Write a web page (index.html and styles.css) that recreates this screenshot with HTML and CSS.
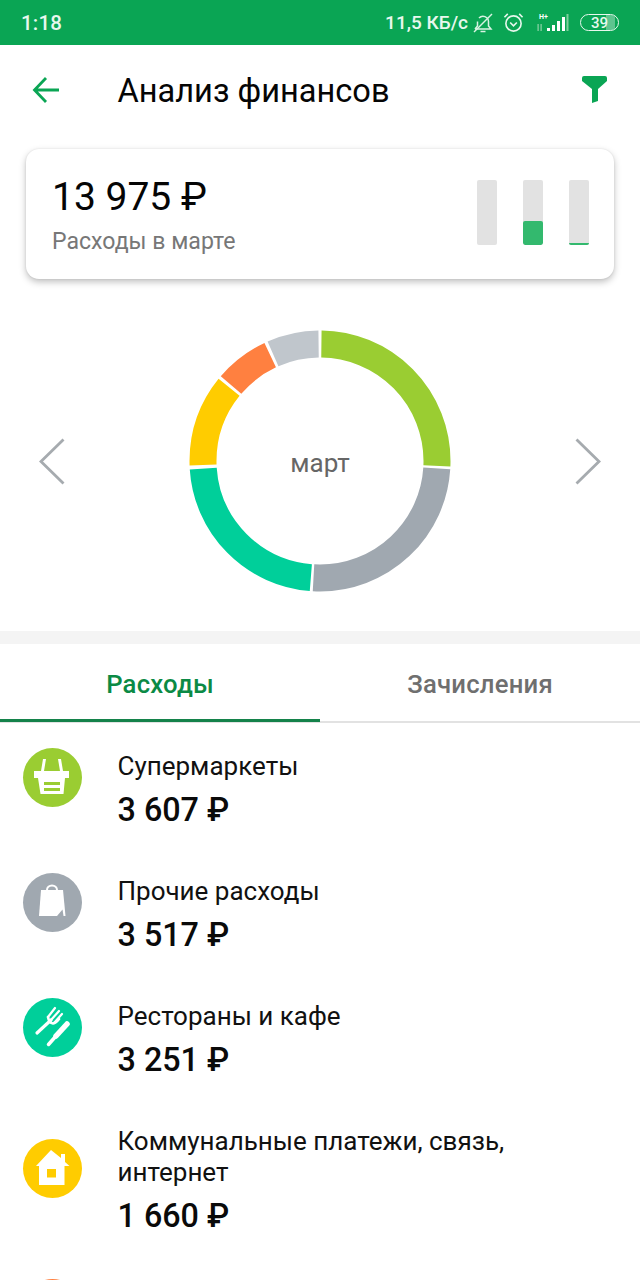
FILE: index.html
```html
<!DOCTYPE html>
<html lang="ru">
<head>
<meta charset="utf-8">
<title>Анализ финансов</title>
<link rel="stylesheet" href="styles.css">
</head>
<body>
<div class="page">
  <header class="statusbar">
    <span class="time">1:18</span>
    <div class="status-right">
      <span class="speed">11,5 КБ/с</span>
      <svg class="st-bell" viewBox="0 0 22 22" fill="none" stroke="#d9f3e3" stroke-width="1.500"><path d="M3 17h16l-2.500-3V9.500A5.500 5.500 0 0 0 7 6M5.500 9.500V14L3 17M8.500 19.500h5"/><path d="M2 20 20 2"/></svg>
      <svg class="st-alarm" viewBox="0 0 22 22" fill="none" stroke="#e6f7ec" stroke-width="1.700"><circle cx="11" cy="12" r="8"/><path d="M7.500 11 11 14.500 14.500 11M1.500 5.500 5 2M20.500 5.500 17 2"/></svg>
      <svg class="st-signal" viewBox="0 0 34 20"><text x="3" y="6" class="st-h">H+</text><rect x="1.500" y="11" width="1.200" height="7" fill="#8fd3a8"/><rect x="4.500" y="11" width="1.200" height="7" fill="#8fd3a8"/><g fill="#fff"><rect x="11" y="15" width="3" height="3"/><rect x="16" y="12" width="3" height="6"/><rect x="21" y="8" width="3" height="10"/><rect x="26" y="4" width="3" height="14"/></g><rect x="30.500" y="1" width="2" height="17" fill="#7fcf9c"/></svg>
      <div class="battery"><span class="battery-fill"></span><span class="battery-num">39</span></div>
    </div>
  </header>

  <nav class="appbar">
    <svg class="back" viewBox="0 0 28 28" fill="none" stroke="#0aa554" stroke-width="2.800"><path d="M27 14H3M14 2 2.500 14 14 26"/></svg>
    <h1 class="title">Анализ финансов</h1>
    <svg class="filter" viewBox="0 0 27 27" fill="#0aa554"><path d="M1 2Q1 0 3 0H24Q26 0 26 2V5L17 13V25L11 27V13L1 5Z"/></svg>
  </nav>

  <section class="card">
    <div class="card-text">
      <div class="card-sum">13 975 ₽</div>
      <div class="card-label">Расходы в марте</div>
    </div>
    <div class="bars">
      <div class="bar"></div>
      <div class="bar"><span class="bar-fill bar-fill-mid"></span></div>
      <div class="bar"><span class="bar-fill bar-fill-low"></span></div>
    </div>
  </section>

  <section class="chart">
    <svg class="chev" viewBox="0 0 26 47" fill="none" stroke="#a6abaf" stroke-width="2.800"><path d="M24.500 1.500 2 23.500 24.500 45.500"/></svg>
    <div class="donut">
      <svg viewBox="0 0 262 262" fill="none" stroke-width="27">
        <circle class="seg" cx="131" cy="131" r="117" pathLength="360" stroke="#9acd32" stroke-dasharray="91.700 268.300" stroke-dashoffset="-0.700"/>
        <circle class="seg" cx="131" cy="131" r="117" pathLength="360" stroke="#a0a8b0" stroke-dasharray="89.600 270.400" stroke-dashoffset="-93.600"/>
        <circle class="seg" cx="131" cy="131" r="117" pathLength="360" stroke="#00cf9a" stroke-dasharray="81.800 278.200" stroke-dashoffset="-184.500"/>
        <circle class="seg" cx="131" cy="131" r="117" pathLength="360" stroke="#ffcc00" stroke-dasharray="41 319" stroke-dashoffset="-268"/>
        <circle class="seg" cx="131" cy="131" r="117" pathLength="360" stroke="#ff8040" stroke-dasharray="24.300 335.700" stroke-dashoffset="-310.500"/>
        <circle class="seg" cx="131" cy="131" r="117" pathLength="360" stroke="#c0c6cc" stroke-dasharray="23 337" stroke-dashoffset="-336.300"/>
      </svg>
      <span class="donut-label">март</span>
    </div>
    <svg class="chev" viewBox="0 0 26 47" fill="none" stroke="#a6abaf" stroke-width="2.800"><path d="M1.500 1.500 24 23.500 1.500 45.500"/></svg>
  </section>

  <div class="divider"></div>

  <div class="tabs">
    <div class="tab tab-active">Расходы</div>
    <div class="tab">Зачисления</div>
  </div>

  <ul class="list">
    <li class="item">
      <span class="ico ico-green">
        <svg viewBox="0 0 59 59" fill="#fff"><path d="M20 11h3l-2 12h-3ZM35 11h3l2 12h-3Z"/><path d="M11 23H46V30H42L40.500 46H17.500L15 30H11Z"/><rect x="21" y="34" width="16" height="3" fill="#9acd32"/><rect x="21" y="40" width="16" height="3" fill="#9acd32"/></svg>
      </span>
      <div class="item-body"><div class="item-name">Супермаркеты</div><div class="item-sum">3 607 ₽</div></div>
    </li>
    <li class="item">
      <span class="ico ico-gray">
        <svg viewBox="0 0 59 59" fill="#fff"><path d="M23 18v-1a6 5.500 0 0 1 12 0v1h-2v-1a4 3.500 0 0 0-8 0v1Z"/><path d="M18 17H40L42.500 43H16Z"/><path d="M34 43 39.500 36.500 40.500 43Z" fill="#a0a8b0"/></svg>
      </span>
      <div class="item-body"><div class="item-name">Прочие расходы</div><div class="item-sum">3 517 ₽</div></div>
    </li>
    <li class="item">
      <span class="ico ico-teal">
        <svg viewBox="0 0 59 59" fill="none" stroke="#fff" stroke-linecap="round"><path d="M14 35 28 22" stroke-width="3.200"/><path d="M25 19 32 10M28 22 36 13M31 25 39 16" stroke-width="2.200"/><path d="M25 19Q26 25 30 25.500Q33 25 36 21" stroke-width="2.600"/><path d="M25.500 46.500 33 38" stroke-width="3.500"/><path d="M33 38 44 26" stroke-width="5.500"/></svg>
      </span>
      <div class="item-body"><div class="item-name">Рестораны и кафе</div><div class="item-sum">3 251 ₽</div></div>
    </li>
    <li class="item">
      <span class="ico ico-yellow">
        <svg viewBox="0 0 59 59" fill="#fff"><path d="M28 11 38 19V15H42V23L46.500 27H41.500V46H16V27H13Z"/><rect x="24" y="30" width="9" height="8.500" fill="#ffcc00"/></svg>
      </span>
      <div class="item-body"><div class="item-name">Коммунальные платежи, связь,<br>интернет</div><div class="item-sum">1 660 ₽</div></div>
    </li>
    <li class="item">
      <span class="ico ico-orange"></span>
      <div class="item-body"><div class="item-name"></div></div>
    </li>
  </ul>
</div>
</body>
</html>
```
FILE: styles.css
```css
* { box-sizing: border-box; }
html, body { margin: 0; padding: 0; background: #fff; }
body { font-family: Roboto, "Liberation Sans", sans-serif; color: #000; }
.page { width: 640px; height: 1280px; overflow: hidden; display: flex; flex-direction: column; }

.statusbar { height: 45px; flex: none; background: #0aa554; color: #e8f8ee; display: flex; align-items: center; justify-content: space-between; padding: 0 21px 0 21px; }
.time { font-size: 20.500px; font-weight: 500; letter-spacing: .2px; }
.status-right { display: flex; align-items: center; }
.speed { font-size: 19px; font-weight: 500; }
.st-bell { width: 22px; height: 22px; margin-left: 4px; }
.st-alarm { width: 21px; height: 21px; margin-left: 9px; }
.st-signal { width: 34px; height: 20px; margin-left: 12px; }
.st-h { font: 700 7px Roboto, sans-serif; fill: #fff; }
.battery { position: relative; width: 39px; height: 17px; margin-left: 10px; border: 1.500px solid #e8f8ee; border-radius: 9px; display: flex; align-items: center; justify-content: center; overflow: hidden; }
.battery-fill { position: absolute; left: 0; top: 0; bottom: 0; width: 92%; border-right: 9px solid rgba(255,255,255,.35); }
.battery-num { position: relative; font-size: 15px; font-weight: 500; }

.appbar { height: 92px; flex: none; display: flex; align-items: center; padding: 0 32px 0 32px; }
.back { width: 28px; height: 28px; flex: none; margin-top: -3px; }
.title { font-size: 32.600px; font-weight: 400; margin: 0 0 0 57.500px; flex: 1; color: #050505; }
.filter { width: 27px; height: 27px; flex: none; margin-top: -3px; }

.card { height: 130px; flex: none; margin: 12px 26px 0; background: #fff; border-radius: 13px; box-shadow: 0 3px 7px rgba(0,0,0,.25), 0 0 2px rgba(0,0,0,.1); display: flex; justify-content: space-between; align-items: center; padding: 0 25px 0 26px; }
.card-sum { font-size: 39px; line-height: 46px; color: #050505; }
.card-label { font-size: 23.100px; line-height: 26px; margin-top: 9px; color: #777; }
.bars { display: flex; gap: 26px; margin-top: -4px; }
.bar { position: relative; width: 20px; height: 65px; background: #e2e2e2; border-radius: 2px; overflow: hidden; }
.bar-fill { position: absolute; left: 0; right: 0; bottom: 0; background: #33b96e; }
.bar-fill-mid { height: 24px; border-radius: 2px; }
.bar-fill-low { height: 1.500px; }

.chart { flex: none; height: 352px; display: flex; align-items: center; justify-content: space-between; padding: 12px 39px 0; }
.chev { width: 26px; height: 47px; }
.donut { position: relative; width: 262px; height: 262px; display: flex; align-items: center; justify-content: center; }
.donut svg { position: absolute; inset: 0; transform: rotate(-90deg); }
.donut-label { position: relative; font-size: 26px; color: #666; top: 2px; }

.divider { height: 13px; flex: none; background: #f4f4f4; }

.tabs { display: flex; flex: none; height: 79px; border-bottom: 2px solid #e2e2e2; }
.tab { flex: 1; text-align: center; font-size: 25.700px; font-weight: 500; line-height: 80px; color: #6f6f6f; letter-spacing: .2px; }
.tab-active { color: #0b8a45; border-bottom: 3px solid #14824a; height: 78px; }

.list { list-style: none; margin: 0; padding: 28px 0 0 23px; }
.item { display: flex; align-items: center; padding-bottom: 46.500px; }
.ico { width: 59px; height: 59px; border-radius: 50%; flex: none; display: block; margin: -10px 0 15.500px; }
.ico svg { width: 59px; height: 59px; display: block; }
.ico-green { background: #9acd32; }
.ico-gray { background: #a0a8b0; }
.ico-teal { background: #00cf9a; }
.ico-yellow { background: #ffcc00; }
.ico-orange { background: #ff8040; }
.item-body { margin-left: 35.500px; min-height: 78.500px; }
.item-name { font-size: 26px; line-height: 31px; color: #111; }
.item-sum { font-size: 32.300px; font-weight: 500; line-height: 40px; margin-top: 7.500px; color: #0a0a0a; }
```
